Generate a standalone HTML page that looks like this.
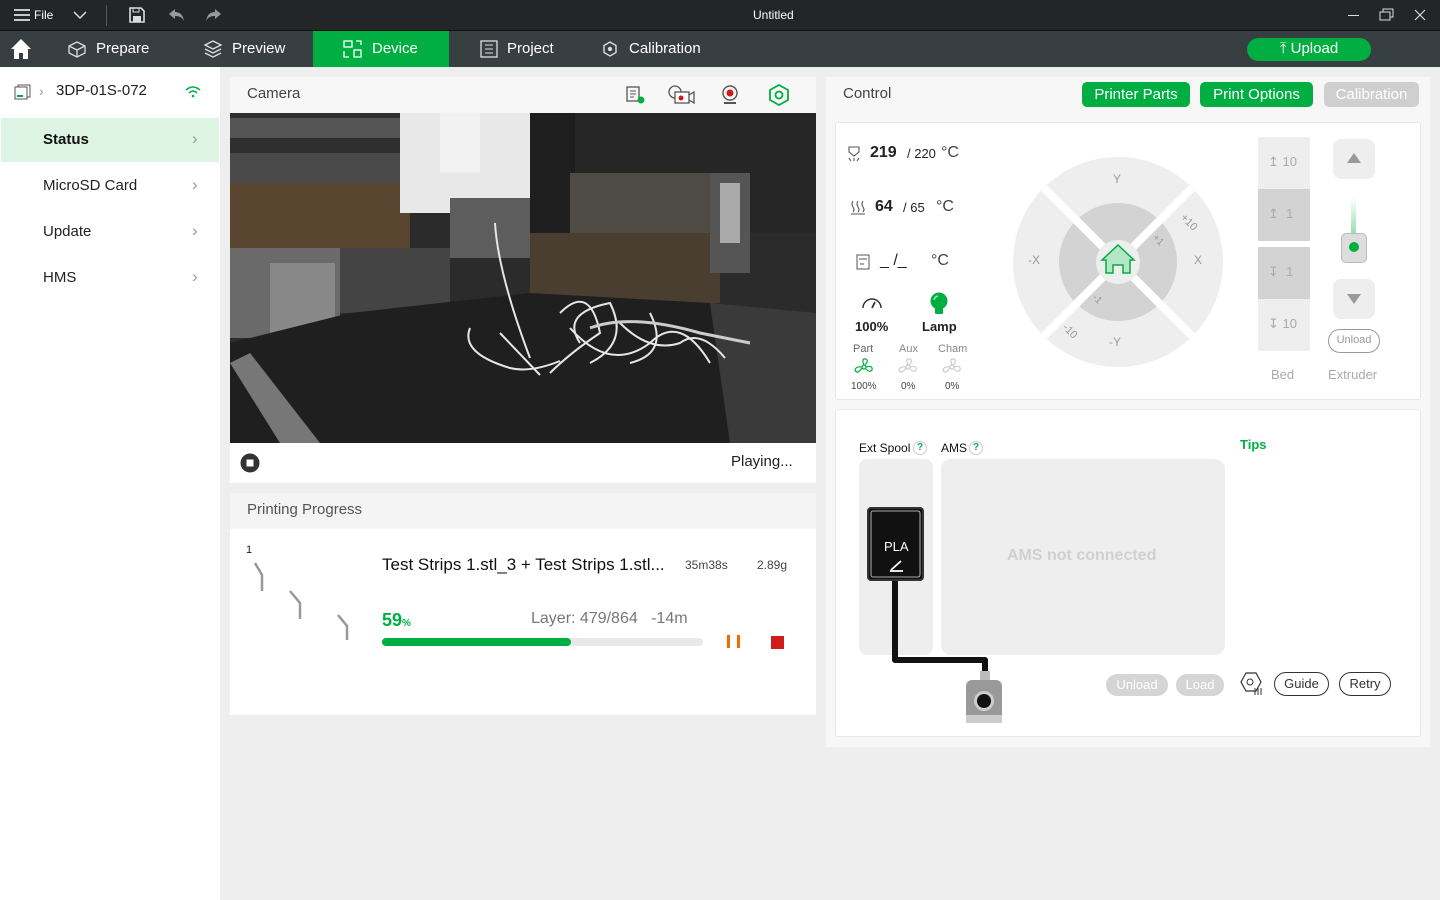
<!DOCTYPE html>
<html><head><meta charset="utf-8"><style>
*{box-sizing:border-box;margin:0;padding:0}
body{width:1440px;height:900px;overflow:hidden;background:#eeeeee;font-family:"Liberation Sans",sans-serif;position:relative;color:#333}
.a{position:absolute}
.t{position:absolute;white-space:nowrap}
.btn{position:absolute;border-radius:5px;color:#fff;font-size:15px;text-align:center}
.pill{position:absolute;border:1px solid #333;border-radius:12px;font-size:13px;text-align:center;line-height:21px;color:#333;background:#fff}
</style></head><body>
<!-- title bar -->
<div class="a" style="left:0;top:0;width:1440px;height:31px;background:#232526;border-bottom:1px solid #111"></div>
<svg class="a" style="left:13px;top:8px" width="18" height="14"><path d="M1 2H17M1 7H17M1 12H17" stroke="#fff" stroke-width="1.5"/></svg>
<div class="t" style="left:34px;top:8px;font-size:12px;color:#fff">File</div>
<svg class="a" style="left:73px;top:11px" width="14" height="9"><path d="M1 1L7 7L13 1" stroke="#ddd" stroke-width="1.5" fill="none"/></svg>
<div class="a" style="left:106px;top:5px;width:1px;height:21px;background:#555"></div>
<svg class="a" style="left:128px;top:6px" width="18" height="18"><path d="M2 2H13L16 5V16H2Z" fill="none" stroke="#ddd" stroke-width="1.6"/><rect x="5" y="10" width="8" height="6" fill="#ddd"/><rect x="5" y="2" width="6" height="4" fill="none" stroke="#ddd"/></svg>
<svg class="a" style="left:167px;top:7px" width="18" height="16"><path d="M8 2L2 7L8 12V9C12 9 15 10 17 14C16 8 13 5 8 5Z" fill="#999"/></svg>
<svg class="a" style="left:205px;top:7px" width="18" height="16"><path d="M10 2L16 7L10 12V9C6 9 3 10 1 14C2 8 5 5 10 5Z" fill="#999"/></svg>
<div class="t" style="left:753px;top:8px;font-size:12px;color:#fff">Untitled</div>
<div class="a" style="left:1348px;top:15px;width:11px;height:1px;background:#ddd"></div>
<svg class="a" style="left:1379px;top:8px" width="16" height="14"><rect x="1" y="4" width="10" height="8" fill="none" stroke="#ddd"/><path d="M4 4V1H14V9H11" fill="none" stroke="#ddd"/></svg>
<svg class="a" style="left:1414px;top:9px" width="12" height="12"><path d="M1 1L11 11M11 1L1 11" stroke="#ddd" stroke-width="1.2"/></svg>
<!-- nav bar -->
<div class="a" style="left:0;top:31px;width:1440px;height:36px;background:#383f42"></div>
<svg class="a" style="left:10px;top:38px" width="22" height="22"><path d="M11 1L1 11H4V21H9V15H13V21H18V11H21Z" fill="#fff"/></svg>
<svg class="a" style="left:68px;top:41px" width="18" height="17"><path d="M9 1L17 5V12L9 16L1 12V5Z M1 5L9 9L17 5M9 9V16" fill="none" stroke="#ddd" stroke-width="1.3"/></svg>
<div class="t" style="left:96px;top:40px;font-size:15px;color:#fff">Prepare</div>
<svg class="a" style="left:204px;top:40px" width="18" height="18"><path d="M9 1L17 5L9 9L1 5Z M1 9L9 13L17 9 M1 13L9 17L17 13" fill="none" stroke="#ddd" stroke-width="1.3"/></svg>
<div class="t" style="left:232px;top:40px;font-size:15px;color:#fff">Preview</div>
<div class="a" style="left:313px;top:31px;width:136px;height:36px;background:#00ae42"></div>
<svg class="a" style="left:343px;top:40px" width="20" height="18"><rect x="1" y="1" width="8" height="6" fill="none" stroke="#fff" stroke-width="1.3"/><rect x="11" y="10" width="7" height="7" fill="none" stroke="#fff" stroke-width="1.3"/><path d="M13 1H18V5M1 11V17H6" fill="none" stroke="#fff" stroke-width="1.3"/></svg>
<div class="t" style="left:372px;top:40px;font-size:15px;color:#fff">Device</div>
<svg class="a" style="left:480px;top:40px" width="18" height="18"><rect x="1" y="1" width="16" height="16" fill="none" stroke="#ddd" stroke-width="1.3"/><path d="M5 5H13M5 9H13M5 13H13" stroke="#ddd"/></svg>
<div class="t" style="left:507px;top:40px;font-size:15px;color:#fff">Project</div>
<svg class="a" style="left:602px;top:41px" width="16" height="16"><path d="M8 1L14 4.5V11.5L8 15L2 11.5V4.5Z" fill="none" stroke="#ddd" stroke-width="1.4"/><circle cx="8" cy="8" r="2.2" fill="#ddd"/></svg>
<div class="t" style="left:629px;top:40px;font-size:15px;color:#fff">Calibration</div>
<div class="btn" style="left:1247px;top:38px;width:124px;height:23px;background:#00ae42;border-radius:12px;line-height:22px">&#x2912;&#xFE0E; Upload</div>
<!-- sidebar -->
<div class="a" style="left:0;top:67px;width:220px;height:833px;background:#fff"></div>
<svg class="a" style="left:14px;top:84px" width="18" height="16"><rect x="1" y="3" width="12" height="12" fill="none" stroke="#555"/><path d="M4 3V1H16V13H13" fill="none" stroke="#555"/><path d="M3 12H9" stroke="#00ae42" stroke-width="2"/></svg>
<div class="t" style="left:39px;top:83px;font-size:14px;color:#999">›</div>
<div class="t" style="left:56px;top:82px;font-size:15px;color:#222">3DP-01S-072</div>
<svg class="a" style="left:184px;top:85px" width="18" height="14"><path d="M2 5Q9 -1 16 5M5 8Q9 4 13 8" stroke="#00ae42" stroke-width="1.5" fill="none"/><circle cx="9" cy="11" r="1.3" fill="#00ae42"/></svg>
<div class="a" style="left:1px;top:118px;width:218px;height:44px;background:#dff5e3"></div>
<div class="t" style="left:43px;top:131px;font-size:15px;font-weight:bold;color:#111">Status</div>
<div class="t" style="left:43px;top:177px;font-size:15px;color:#222">MicroSD Card</div>
<div class="t" style="left:43px;top:223px;font-size:15px;color:#222">Update</div>
<div class="t" style="left:43px;top:269px;font-size:15px;color:#222">HMS</div>
<div class="t" style="left:192px;top:129px;font-size:17px;color:#999">›</div>
<div class="t" style="left:192px;top:175px;font-size:17px;color:#999">›</div>
<div class="t" style="left:192px;top:221px;font-size:17px;color:#999">›</div>
<div class="t" style="left:192px;top:267px;font-size:17px;color:#999">›</div>
<!-- camera panel -->
<div class="a" style="left:230px;top:77px;width:586px;height:36px;background:#f7f7f7"></div>
<div class="t" style="left:247px;top:85px;font-size:15px;color:#444">Camera</div>
<svg class="a" style="left:625px;top:85px" width="22" height="20"><rect x="2" y="2" width="12" height="14" fill="none" stroke="#555" stroke-width="1.3"/><path d="M5 6H11M5 9H11M5 12H9" stroke="#555"/><circle cx="16" cy="15" r="3.5" fill="#00ae42"/></svg>
<svg class="a" style="left:667px;top:84px" width="30" height="22"><circle cx="8" cy="8" r="6" fill="none" stroke="#555" stroke-width="1.3"/><rect x="8" y="8" width="14" height="11" fill="#fff" stroke="#555" stroke-width="1.3"/><circle cx="14" cy="14" r="2.5" fill="#d01b1b"/><path d="M22 11L27 8V19L22 16" fill="none" stroke="#555" stroke-width="1.3"/></svg>
<svg class="a" style="left:721px;top:85px" width="18" height="20"><circle cx="9" cy="8" r="7" fill="none" stroke="#555" stroke-width="1.4"/><circle cx="9" cy="8" r="3.5" fill="#d01b1b"/><path d="M3 18H15" stroke="#555" stroke-width="2"/></svg>
<svg class="a" style="left:768px;top:84px" width="22" height="22"><path d="M11 1L20 6V16L11 21L2 16V6Z" fill="none" stroke="#00ae42" stroke-width="1.8"/><circle cx="11" cy="11" r="3.5" fill="none" stroke="#00ae42" stroke-width="1.8"/></svg>
<svg class="a" style="left:230px;top:113px" width="586" height="330" viewBox="0 0 586 330">
<rect width="586" height="330" fill="#2b2b2b"/>
<rect x="0" y="0" width="200" height="70" fill="#2f2f2f"/>
<rect x="0" y="5" width="210" height="20" fill="#555"/>
<rect x="0" y="40" width="210" height="30" fill="#4a4a4a"/>
<rect x="0" y="70" width="180" height="75" fill="#5a4630"/>
<rect x="170" y="0" width="130" height="100" fill="#e8e8e8"/>
<rect x="210" y="0" width="40" height="60" fill="#f2f2f2"/>
<rect x="220" y="85" width="95" height="60" fill="#5d5d5d"/>
<rect x="300" y="0" width="45" height="148" fill="#1e1e1e"/>
<rect x="345" y="0" width="241" height="120" fill="#262626"/>
<rect x="340" y="60" width="150" height="60" fill="#4e4a44"/>
<rect x="300" y="120" width="190" height="70" fill="#4a3e30"/>
<rect x="480" y="60" width="40" height="100" fill="#555"/>
<rect x="490" y="70" width="20" height="60" fill="#aaa"/>
<rect x="0" y="135" width="110" height="90" fill="#6a6a6a"/>
<rect x="40" y="150" width="65" height="75" fill="#888"/>
<rect x="110" y="135" width="110" height="65" fill="#444"/>
<path d="M0 230L120 200L300 180L480 190L510 330H0Z" fill="#1f1f1f"/>
<path d="M0 250L20 240L90 330H50Z" fill="#777"/>
<path d="M480 190L586 200V330H500Z" fill="#3a3a3a"/>
<path d="M265 110Q268 160 300 245M240 215Q230 240 280 255Q300 260 330 248M270 220L310 262M330 200Q360 170 370 220Q340 240 320 260M340 215Q380 260 420 230Q450 200 480 250M390 210Q420 240 450 230Q470 215 495 245M350 230Q330 200 380 190Q400 230 360 250M420 200Q440 240 400 250" stroke="#e6e6e6" stroke-width="2" fill="none"/>
<path d="M360 215Q400 200 470 220L520 230" stroke="#ccc" stroke-width="3" fill="none"/>
</svg>
<div class="a" style="left:230px;top:443px;width:586px;height:40px;background:#fff"></div>
<svg class="a" style="left:240px;top:453px" width="20" height="20"><circle cx="10" cy="10" r="9.5" fill="#333"/><rect x="6.5" y="6.5" width="7" height="7" fill="#fff"/></svg>
<div class="t" style="left:731px;top:453px;font-size:15px;color:#222">Playing...</div>
<!-- progress -->
<div class="a" style="left:230px;top:493px;width:586px;height:36px;background:#f4f4f4"></div>
<div class="t" style="left:247px;top:501px;font-size:15px;color:#555">Printing Progress</div>
<div class="a" style="left:230px;top:529px;width:586px;height:186px;background:#fff"></div>
<div class="t" style="left:246px;top:544px;font-size:11px;color:#222">1</div>
<svg class="a" style="left:250px;top:558px" width="110" height="85"><path d="M5 5L12 17V33M40 33L50 45V61M88 57L97 68V82" stroke="#999" stroke-width="2.5" fill="none"/></svg>
<div class="t" style="left:382px;top:555px;font-size:17px;color:#111">Test Strips 1.stl_3 + Test Strips 1.stl...</div>
<div class="t" style="left:685px;top:558px;font-size:12px;color:#444">35m38s</div>
<div class="t" style="left:757px;top:558px;font-size:12px;color:#444">2.89g</div>
<div class="t" style="left:382px;top:610px;font-size:18px;font-weight:bold;color:#00ae42">59<span style="font-size:10px">%</span></div>
<div class="t" style="left:531px;top:610px;font-size:16px;color:#777">Layer: 479/864 &nbsp;&nbsp;-14m</div>
<div class="a" style="left:382px;top:638px;width:321px;height:8px;border-radius:4px;background:#e8e8e8"></div>
<div class="a" style="left:382px;top:638px;width:189px;height:8px;border-radius:4px;background:#00ae42"></div>
<div class="a" style="left:727px;top:635px;width:3px;height:13px;background:#f56a00"></div>
<div class="a" style="left:737px;top:635px;width:3px;height:13px;background:#f56a00"></div>
<div class="a" style="left:771px;top:636px;width:13px;height:13px;background:#d01b1b"></div>
<!-- right panel -->
<div class="a" style="left:826px;top:77px;width:604px;height:670px;background:#f7f7f7"></div>
<div class="t" style="left:843px;top:85px;font-size:15px;color:#444">Control</div>
<div class="btn" style="left:1082px;top:82px;width:108px;height:25px;background:#00ae42;line-height:25px">Printer Parts</div>
<div class="btn" style="left:1200px;top:82px;width:113px;height:25px;background:#00ae42;line-height:25px">Print Options</div>
<div class="btn" style="left:1324px;top:82px;width:95px;height:25px;background:#cfcfcf;line-height:25px">Calibration</div>
<div class="a" style="left:835px;top:122px;width:586px;height:278px;background:#fff;border:1px solid #e8e8e8;border-radius:3px"></div>
<svg class="a" style="left:846px;top:145px" width="16" height="18"><path d="M3 2H13V7L8 11L3 7Z M3 13L5 16M8 13V16M13 13L11 16" fill="none" stroke="#555" stroke-width="1.1"/></svg>
<div class="t" style="left:870px;top:144px;font-size:16px;font-weight:bold;color:#222">219</div>
<div class="t" style="left:907px;top:146px;font-size:13px;color:#222">/ 220</div>
<div class="t" style="left:941px;top:144px;font-size:16px;color:#444">°C</div>
<svg class="a" style="left:850px;top:200px" width="16" height="16"><path d="M3 1Q1 4 3 7Q5 10 3 12M8 1Q6 4 8 7Q10 10 8 12M13 1Q11 4 13 7Q15 10 13 12M1 14H15" fill="none" stroke="#555" stroke-width="1.1"/></svg>
<div class="t" style="left:875px;top:198px;font-size:16px;font-weight:bold;color:#222">64</div>
<div class="t" style="left:903px;top:200px;font-size:13px;color:#222">/ 65</div>
<div class="t" style="left:936px;top:198px;font-size:16px;color:#444">°C</div>
<svg class="a" style="left:856px;top:254px" width="14" height="16"><rect x="1" y="1" width="12" height="14" fill="none" stroke="#555"/><path d="M3 5H11M4 10H8" stroke="#555"/></svg>
<div class="t" style="left:880px;top:252px;font-size:16px;color:#222">_ /_</div>
<div class="t" style="left:931px;top:252px;font-size:16px;color:#444">°C</div>
<svg class="a" style="left:861px;top:294px" width="22" height="18"><path d="M2 14A9 9 0 1 1 20 14" fill="none" stroke="#333" stroke-width="1.5"/><path d="M11 14L14 8" stroke="#333" stroke-width="1.8"/></svg>
<div class="t" style="left:855px;top:319px;font-size:13px;font-weight:bold;color:#222">100%</div>
<svg class="a" style="left:928px;top:292px" width="22" height="24"><circle cx="11" cy="9" r="8.5" fill="#00ae42"/><rect x="7" y="15" width="8" height="7" rx="1" fill="#00ae42"/><path d="M6 8A5 5 0 0 1 10 4" stroke="#9fe8b8" stroke-width="1.5" fill="none"/></svg>
<div class="t" style="left:922px;top:319px;font-size:13px;font-weight:bold;color:#222">Lamp</div>
<div class="t" style="left:853px;top:343px;font-size:11px;color:#666">Part</div>
<div class="t" style="left:899px;top:343px;font-size:11px;color:#888">Aux</div>
<div class="t" style="left:938px;top:343px;font-size:11px;color:#888">Cham</div>
<svg class="a" style="left:853px;top:357px" width="22" height="20"><g fill="none" stroke="#00ae42" stroke-width="1.2"><circle cx="11" cy="10" r="2"/><path d="M11 8Q8 1 13 2Q16 4 12 8M13 10Q20 8 19 13Q17 16 13 12M9 11Q4 18 2 13Q3 9 9 10"/></g></svg>
<svg class="a" style="left:897px;top:357px" width="22" height="20"><g fill="none" stroke="#ccc" stroke-width="1.2"><circle cx="11" cy="10" r="2"/><path d="M11 8Q8 1 13 2Q16 4 12 8M13 10Q20 8 19 13Q17 16 13 12M9 11Q4 18 2 13Q3 9 9 10"/></g></svg>
<svg class="a" style="left:941px;top:357px" width="22" height="20"><g fill="none" stroke="#ccc" stroke-width="1.2"><circle cx="11" cy="10" r="2"/><path d="M11 8Q8 1 13 2Q16 4 12 8M13 10Q20 8 19 13Q17 16 13 12M9 11Q4 18 2 13Q3 9 9 10"/></g></svg>
<div class="t" style="left:851px;top:381px;font-size:10px;color:#444">100%</div>
<div class="t" style="left:901px;top:381px;font-size:10px;color:#444">0%</div>
<div class="t" style="left:945px;top:381px;font-size:10px;color:#444">0%</div>
<!-- jog -->
<svg class="a" style="left:1012px;top:156px" width="212" height="212" viewBox="0 0 212 212">
<circle cx="106" cy="106" r="105" fill="#eeeeee"/>
<circle cx="106" cy="106" r="59" fill="#d3d3d3"/>
<path d="M32 32L180 180M180 32L32 180" stroke="#fff" stroke-width="8"/>
<circle cx="106" cy="106" r="22" fill="#eeeeee"/>
<path d="M94 117V104H90L106 89L122 104H118V117H111V109H101V117Z" fill="#b5e6c6" stroke="#00ae42" stroke-width="1.5"/>
<g font-family="Liberation Sans" font-size="12" fill="#999"><text x="101" y="27">Y</text><text x="97" y="190">-Y</text><text x="16" y="108">-X</text><text x="182" y="108">X</text>
<text x="168" y="62" transform="rotate(45 168 62)" font-size="11">+10</text><text x="140" y="82" transform="rotate(45 140 82)" font-size="10">+1</text>
<text x="80" y="142" transform="rotate(45 80 142)" font-size="10">-1</text><text x="50" y="172" transform="rotate(45 50 172)" font-size="11">-10</text></g>
</svg>
<!-- bed -->
<div class="a" style="left:1258px;top:137px;width:52px;height:52px;background:#eeeeee"></div>
<div class="a" style="left:1258px;top:189px;width:52px;height:52px;background:#d3d3d3"></div>
<div class="a" style="left:1258px;top:247px;width:52px;height:52px;background:#d3d3d3"></div>
<div class="a" style="left:1258px;top:299px;width:52px;height:52px;background:#eeeeee"></div>
<div class="t" style="left:1268px;top:154px;font-size:13px;color:#aaa">&#x21A5; 10</div>
<div class="t" style="left:1268px;top:206px;font-size:13px;color:#aaa">&#x21A5; &nbsp;1</div>
<div class="t" style="left:1268px;top:264px;font-size:13px;color:#aaa">&#x21A7; &nbsp;1</div>
<div class="t" style="left:1268px;top:316px;font-size:13px;color:#aaa">&#x21A7; 10</div>
<div class="t" style="left:1271px;top:367px;font-size:13px;color:#aaa">Bed</div>
<div class="a" style="left:1333px;top:139px;width:42px;height:40px;border-radius:8px;background:#eeeeee"></div>
<svg class="a" style="left:1346px;top:152px" width="16" height="12"><path d="M8 1L15 11H1Z" fill="#999"/></svg>
<div class="a" style="left:1351px;top:197px;width:5px;height:40px;background:linear-gradient(#fff,#8fdca8)"></div>
<div class="a" style="left:1341px;top:233px;width:26px;height:30px;border-radius:5px;background:#ddd;border:1px solid #bbb"></div>
<div class="a" style="left:1349px;top:242px;width:10px;height:10px;border-radius:5px;background:#00ae42"></div>
<div class="a" style="left:1333px;top:279px;width:42px;height:40px;border-radius:8px;background:#eeeeee"></div>
<svg class="a" style="left:1346px;top:293px" width="16" height="12"><path d="M8 11L15 1H1Z" fill="#999"/></svg>
<div class="pill" style="left:1328px;top:329px;width:52px;height:24px;font-size:11px;color:#999;border-color:#999">Unload</div>
<div class="t" style="left:1328px;top:367px;font-size:13px;color:#aaa">Extruder</div>
<!-- AMS box -->
<div class="a" style="left:835px;top:409px;width:586px;height:328px;background:#fff;border:1px solid #e8e8e8;border-radius:3px"></div>
<div class="t" style="left:859px;top:441px;font-size:12px;color:#111">Ext Spool</div>
<div class="a" style="left:913px;top:441px;width:14px;height:14px;border:1px solid #ccc;border-radius:7px;font-size:10px;color:#00ae42;text-align:center;line-height:12px;font-weight:bold">?</div>
<div class="t" style="left:941px;top:441px;font-size:12px;color:#111">AMS</div>
<div class="a" style="left:969px;top:441px;width:14px;height:14px;border:1px solid #ccc;border-radius:7px;font-size:10px;color:#00ae42;text-align:center;line-height:12px;font-weight:bold">?</div>
<div class="t" style="left:1240px;top:437px;font-size:13px;font-weight:bold;color:#00ae42">Tips</div>
<div class="a" style="left:859px;top:459px;width:74px;height:196px;border-radius:8px;background:#eeeeee"></div>
<div class="a" style="left:941px;top:459px;width:284px;height:196px;border-radius:10px;background:#eeeeee"></div>
<div class="t" style="left:1007px;top:547px;font-size:16px;font-weight:bold;color:#d0d0d0">AMS not connected</div>
<svg class="a" style="left:860px;top:505px" width="150" height="225">
<path d="M35 75V155H125V170" fill="none" stroke="#111" stroke-width="6" stroke-linejoin="round"/>
<rect x="8" y="3" width="55" height="72" rx="3" fill="#111" stroke="#333" stroke-width="2"/>
<rect x="11" y="6" width="49" height="66" rx="2" fill="#111" stroke="#ddd" stroke-width="0.8"/>
<path d="M31 65L41 56M30 66H43" stroke="#fff" stroke-width="1.8"/>
<rect x="120" y="166" width="10" height="10" fill="#bbb"/>
<rect x="106" y="175" width="36" height="42" rx="6" fill="#999"/>
<rect x="106" y="210" width="36" height="8" fill="#ccc"/>
<circle cx="124" cy="196" r="10" fill="#ccc"/><circle cx="124" cy="196" r="7" fill="#111"/>
</svg>
<div class="t" style="left:884px;top:539px;font-size:13px;color:#fff">PLA</div>
<div class="btn" style="left:1106px;top:674px;width:62px;height:22px;background:#d5d5d5;border-radius:11px;font-size:13px;line-height:22px">Unload</div>
<div class="btn" style="left:1176px;top:674px;width:48px;height:22px;background:#d5d5d5;border-radius:11px;font-size:13px;line-height:22px">Load</div>
<svg class="a" style="left:1239px;top:671px" width="26" height="26"><path d="M7 2H17L22 11L17 20H7L2 11Z" fill="none" stroke="#333" stroke-width="1.2"/><circle cx="11" cy="11" r="3" fill="none" stroke="#333"/><path d="M16 17V24M19 17V24M22 17V24" stroke="#333"/></svg>
<div class="pill" style="left:1274px;top:672px;width:55px;height:24px">Guide</div>
<div class="pill" style="left:1339px;top:672px;width:52px;height:24px">Retry</div>
</body></html>
